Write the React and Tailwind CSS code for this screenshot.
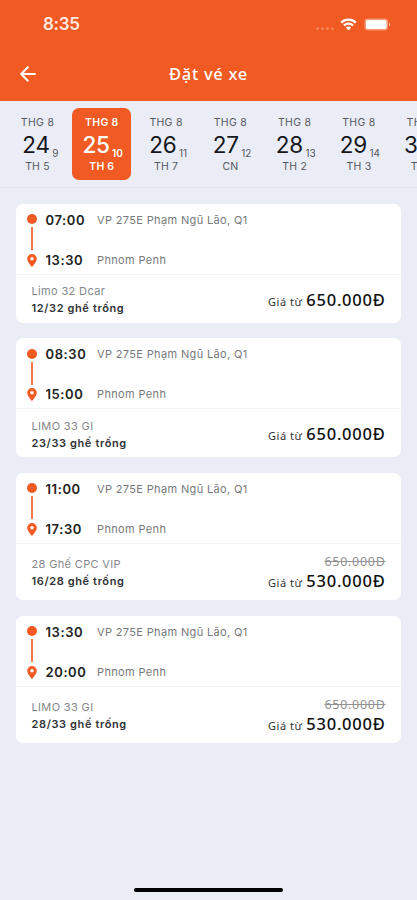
const DAYS = [
  { month: "THG 8", day: "24", lunar: "9", weekday: "TH 5" },
  { month: "THG 8", day: "25", lunar: "10", weekday: "TH 6" },
  { month: "THG 8", day: "26", lunar: "11", weekday: "TH 7" },
  { month: "THG 8", day: "27", lunar: "12", weekday: "CN" },
  { month: "THG 8", day: "28", lunar: "13", weekday: "TH 2" },
  { month: "THG 8", day: "29", lunar: "14", weekday: "TH 3" },
  { month: "THG 8", day: "30", lunar: "15", weekday: "TH 4" },
];

const TRIPS = [
  { start: "07:00", end: "13:30", bus: "Limo 32 Dcar", seats: "12/32", price: "650.000Đ" },
  { start: "08:30", end: "15:00", bus: "LIMO 33 GI", seats: "23/33", price: "650.000Đ" },
  { start: "11:00", end: "17:30", bus: "28 Ghế CPC VIP", seats: "16/28", price: "530.000Đ", oldPrice: "650.000Đ" },
  { start: "13:30", end: "20:00", bus: "LIMO 33 GI", seats: "28/33", price: "530.000Đ", oldPrice: "650.000Đ" },
];

export default function App() {
  return (
    <div className="flex h-[900px] w-full flex-col overflow-hidden bg-[#eaedf6] font-['Inter',sans-serif]">
      <Header />
      <DateStrip selected="25" />
      <main className="flex flex-1 flex-col gap-[15.5px] px-4 pt-[15.7px]">
        {TRIPS.map((trip) => (
          <TripCard key={trip.start} trip={trip} />
        ))}
      </main>
      <div className="mx-auto mb-2 h-1 w-[149px] rounded-full bg-black" />
    </div>
  );
}

const Header = () => {
  return (
    <header className="h-[100.5px] shrink-0 bg-[#f15a22] text-white">
      <div className="flex h-12 items-center justify-between pl-[43px] pr-[26px]">
        <span className="text-[17px] font-semibold leading-none tracking-[-0.3px] text-[#ffe9e0]">8:35</span>
        <div className="flex items-center">
          <div className="mr-[6px] mt-2 flex gap-[2px]">
            <i className="size-[3px] rounded-full bg-white/25" />
            <i className="size-[3px] rounded-full bg-white/25" />
            <i className="size-[3px] rounded-full bg-white/25" />
            <i className="size-[3px] rounded-full bg-white/25" />
          </div>
          <svg className="mr-[7px]" width="17" height="13" viewBox="0 0 17 13" fill="none">
            <path d="M1.2 4.6C5.2 0.7 11.8 0.7 15.8 4.6" stroke="white" strokeWidth="2.3" />
            <path d="M3.9 7.4C6.4 5 10.6 5 13.1 7.4" stroke="white" strokeWidth="2.1" />
            <path d="M8.5 12.4L5.9 9.6C7.3 8.2 9.7 8.2 11.1 9.6Z" fill="white" />
          </svg>
          <svg width="27" height="13" viewBox="0 0 27 13">
            <rect x="0.5" y="0.5" width="23.5" height="12" rx="3.4" fill="white" fillOpacity="0.4" />
            <rect x="2" y="2" width="20.5" height="9" rx="1.8" fill="white" />
            <path d="M25 4.3C26.6 5 26.6 8 25 8.7Z" fill="white" fillOpacity="0.6" />
          </svg>
        </div>
      </div>
      <div className="grid h-[52px] grid-cols-[48px_1fr_48px] items-center">
        <svg className="ml-5" width="16" height="16" viewBox="0 0 16 16" fill="none" stroke="white" strokeWidth="2" strokeLinecap="round" strokeLinejoin="round">
          <path d="M15 8H1.5M7.8 1.3L1.2 8L7.8 14.7" />
        </svg>
        <h1 className="text-center font-['Noto_Sans',sans-serif] text-[16.5px] font-medium leading-none tracking-[0.7px]">Đặt vé xe</h1>
      </div>
    </header>
  );
};

const DateStrip = ({ selected }) => {
  return (
    <div className="flex h-[87.5px] shrink-0 gap-[5.3px] overflow-hidden border-b border-[#dfe4ec] pl-2 pt-[7.5px]">
      {DAYS.map(({ month, day, lunar, weekday }) => {
        const active = day === selected;
        return (
          <div
            key={day}
            className={
              active
                ? "flex h-[72px] w-[59px] shrink-0 flex-col items-center rounded-[7px] bg-[#f15a22] pt-[9px] font-semibold text-white"
                : "flex h-[72px] w-[59px] shrink-0 flex-col items-center pt-[9px] text-[#55585f]"
            }
          >
            <span className="text-[10.5px] leading-[11px] tracking-[0.3px]">{month}</span>
            {/* lunar day hangs off the right edge of the solar day */}
            <span className="mt-[5px] flex h-[23px] items-end justify-end self-stretch pr-[8.5px]">
              <span className={active ? "text-[22.5px] font-medium leading-[23px] tracking-[-0.4px]" : "text-[22.5px] leading-[23px] tracking-[-0.2px] text-[#15171c]"}>{day}</span>
              <span className="relative top-[4px] ml-[2.5px] text-[10px] leading-[13px]">{lunar}</span>
            </span>
            <span className="mt-[5px] text-[10.5px] leading-[11px] tracking-[0.2px]">{weekday}</span>
          </div>
        );
      })}
    </div>
  );
};

const TripCard = ({ trip }) => {
  return (
    <section className="shrink-0 rounded-[7px] bg-white">
      <div className="flex h-[71px] border-b border-[#f3f4f6] pl-[10px] pt-[10.5px]">
        <div className="flex w-[11px] flex-col items-center">
          <span className="size-[10px] shrink-0 rounded-full bg-[#f15a22]" />
          <span className="mt-[3px] h-[23px] w-[2px] shrink-0 bg-[#f4764a]" />
          <svg className="mt-[3.5px] shrink-0" width="10" height="13" viewBox="0 0 10 13">
            <path fillRule="evenodd" d="M5 0A4.8 4.8 0 0 0 .2 4.8C.2 8.1 5 13 5 13S9.8 8.1 9.8 4.8A4.8 4.8 0 0 0 5 0ZM5 3A1.8 1.8 0 1 1 5 6.6A1.8 1.8 0 0 1 5 3Z" fill="#f15a22" />
          </svg>
        </div>
        <div className="ml-[8.5px] flex flex-col gap-[24px]">
          <Stop time={trip.start} place="VP 275E Phạm Ngũ Lão, Q1" />
          <Stop time={trip.end} place="Phnom Penh" />
        </div>
      </div>
      <div className={trip.oldPrice ? "flex h-[56.5px] items-end justify-between px-[15.5px] pb-[9.9px]" : "flex h-[48px] items-end justify-between px-[15.5px] pb-[5.7px]"}>
        <div className="flex flex-col text-[11px] leading-[17px]">
          <span className="tracking-[0.35px] text-[#85878b]">{trip.bus}</span>
          <span className="font-semibold tracking-[0.62px] text-[#303236]">{trip.seats} ghế trống</span>
        </div>
        <div className={trip.oldPrice ? "-mb-[1.5px] flex flex-col items-end font-['Noto_Sans',sans-serif]" : "flex flex-col items-end pb-[6.3px] font-['Noto_Sans',sans-serif]"}>
          {trip.oldPrice && <span className="text-[12.5px] leading-[19px] tracking-[0.7px] text-[#929292] line-through">{trip.oldPrice}</span>}
          <span className="flex items-baseline gap-[4px] leading-[19px]">
            <span className="text-[11px] tracking-[0.5px] text-[#333]">Giá từ</span>
            <span className="text-[16.5px] font-medium tracking-[0.75px] text-[#111]">{trip.price}</span>
          </span>
        </div>
      </div>
    </section>
  );
};

const Stop = ({ time, place }) => {
  return (
    <div className="flex h-4 items-center -mt-[2.5px] mb-[2.5px] leading-4">
      <span className="w-[51.5px] text-[13px] font-semibold tracking-[0.6px] text-[#222]">{time}</span>
      <span className="text-[11px] tracking-[0.35px] text-[#77797d]">{place}</span>
    </div>
  );
};
